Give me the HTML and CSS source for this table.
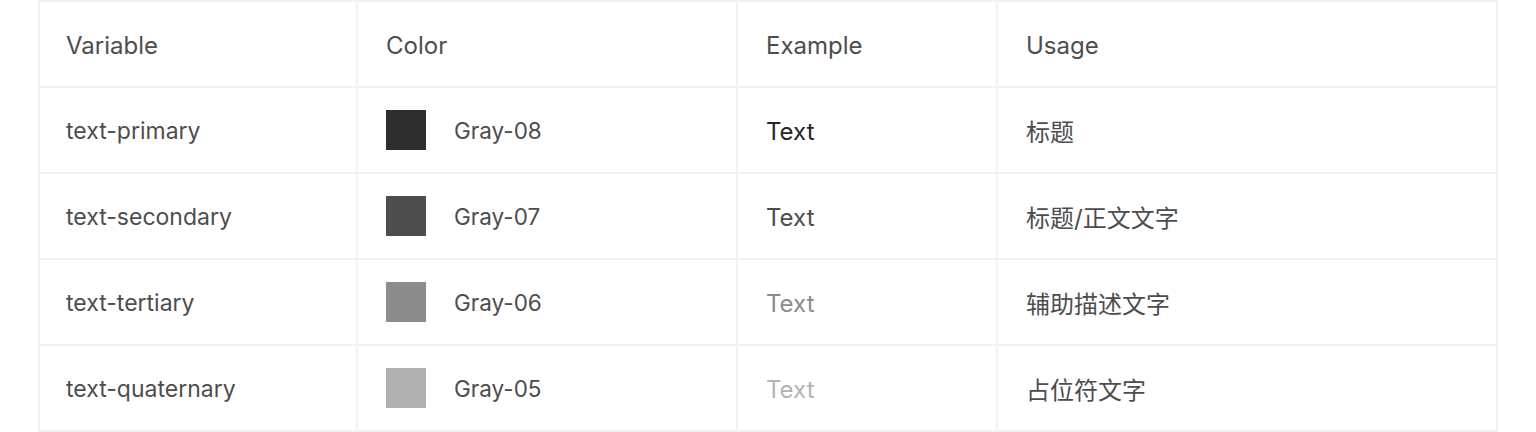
FILE: index.html
```html
<!DOCTYPE html>
<html lang="zh-CN">
<head>
<meta charset="utf-8">
<title>Text colors</title>
<link rel="stylesheet" href="styles.css">
</head>
<body>
<div class="page">
  <div class="table">
    <div class="cell first head">Variable</div>
    <div class="cell head">Color</div>
    <div class="cell head">Example</div>
    <div class="cell head">Usage</div>

    <div class="cell first">text-primary</div>
    <div class="cell"><span class="swatch g8"></span><span class="label">Gray-08</span></div>
    <div class="cell ex t1">Text</div>
    <div class="cell usage">标题</div>

    <div class="cell first">text-secondary</div>
    <div class="cell"><span class="swatch g7"></span><span class="label">Gray-07</span></div>
    <div class="cell ex t2">Text</div>
    <div class="cell usage">标题/正文文字</div>

    <div class="cell first">text-tertiary</div>
    <div class="cell"><span class="swatch g6"></span><span class="label">Gray-06</span></div>
    <div class="cell ex t3">Text</div>
    <div class="cell usage">辅助描述文字</div>

    <div class="cell first">text-quaternary</div>
    <div class="cell"><span class="swatch g5"></span><span class="label">Gray-05</span></div>
    <div class="cell ex t4">Text</div>
    <div class="cell usage">占位符文字</div>
  </div>
</div>
</body>
</html>
```
FILE: styles.css
```css
html, body {
  margin: 0;
  padding: 0;
  background: #ffffff;
}
.page {
  padding-left: 38px;
}
.table {
  display: grid;
  grid-template-columns: 316px 378px 258px 498px;
  grid-auto-rows: 84px;
  gap: 2px;
  padding: 2px;
  width: max-content;
  background: #f2f2f2;
  font-family: Inter, "Noto Sans CJK SC", sans-serif;
  font-size: 23px;
  color: #4d4d4d;
}
.cell {
  background: #ffffff;
  display: flex;
  align-items: center;
  padding-left: 28px;
  white-space: nowrap;
}
.cell.first,
.cell.ex,
.cell.head {
  padding-top: 2px;
}
.cell.first {
  padding-left: 26px;
}
.cell.head,
.cell.ex,
.cell.usage {
  font-size: 24px;
}
.label {
  font-size: 22.5px;
}
.swatch {
  width: 40px;
  height: 40px;
  flex: none;
  margin-right: 28px;
}
.g8 { background: #2d2d2d; }
.g7 { background: #4d4d4d; }
.g6 { background: #8c8c8c; }
.g5 { background: #b0b0b0; }
.t1 { color: #262626; }
.t2 { color: #4d4d4d; }
.t3 { color: #8c8c8c; }
.t4 { color: #b3b3b3; }
```
